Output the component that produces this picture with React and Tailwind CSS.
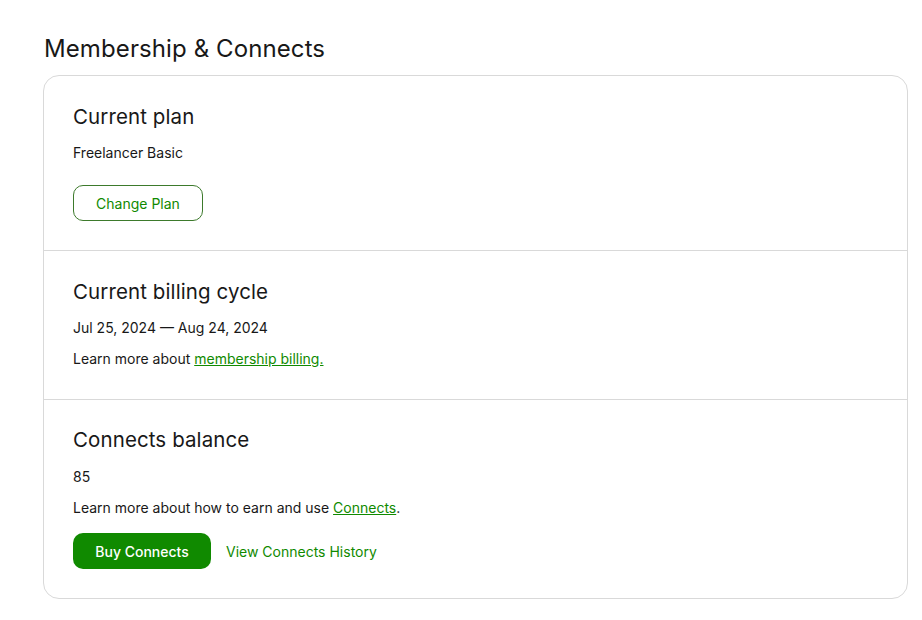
export default function App() {
  return (
    <div className="min-h-[620px] bg-white pt-[33px] pl-[43px] text-[#181818]" style={{ fontFamily: 'Inter, "Liberation Sans", sans-serif' }}>
      <h1 className="text-[24px] leading-8 font-normal tracking-[0.1px] pl-px">Membership &amp; Connects</h1>
      <div className="mt-[10px] w-[865px] rounded-2xl border border-[#d9d9d9]">
        {/* Current plan */}
        <section className="px-[29px] pt-[27px] pb-[29px] border-b border-[#d9d9d9]">
          <h2 className="text-[20.5px] leading-7 font-normal tracking-[0.1px]">Current plan</h2>
          <p className="mt-3 text-[14px] leading-5">Freelancer Basic</p>
          <button className="mt-[22px] h-9 w-[130px] rounded-[10px] border border-[#3d7a2c] text-[14px] text-[#108a00]">
            Change Plan
          </button>
        </section>

        {/* Current billing cycle */}
        <section className="px-[29px] pt-[27px] pb-[30px] border-b border-[#d9d9d9]">
          <h2 className="text-[20.5px] leading-7 font-normal tracking-[0.1px]">Current billing cycle</h2>
          <p className="mt-3 text-[14px] leading-5">Jul 25, 2024 — Aug 24, 2024</p>
          <p className="mt-[11px] text-[14px] leading-5">
            Learn more about{' '}
            <a href="#" className="text-[#108a00] underline">membership billing.</a>
          </p>
        </section>

        {/* Connects balance */}
        <section className="px-[29px] pt-[26px] pb-[29px]">
          <h2 className="text-[20.5px] leading-7 font-normal tracking-[0.1px]">Connects balance</h2>
          <p className="mt-[13px] text-[14px] leading-5">85</p>
          <p className="mt-[11px] text-[14px] leading-5">
            Learn more about how to earn and use{' '}
            <a href="#" className="text-[#108a00] underline">Connects</a>.
          </p>
          <div className="mt-[15px] flex items-center gap-[15px]">
            <button className="h-9 w-[138px] rounded-[10px] bg-[#108a00] text-[14px] font-medium text-white">
              Buy Connects
            </button>
            <a href="#" className="text-[14px] text-[#108a00]">View Connects History</a>
          </div>
        </section>
      </div>
    </div>
  )
}
